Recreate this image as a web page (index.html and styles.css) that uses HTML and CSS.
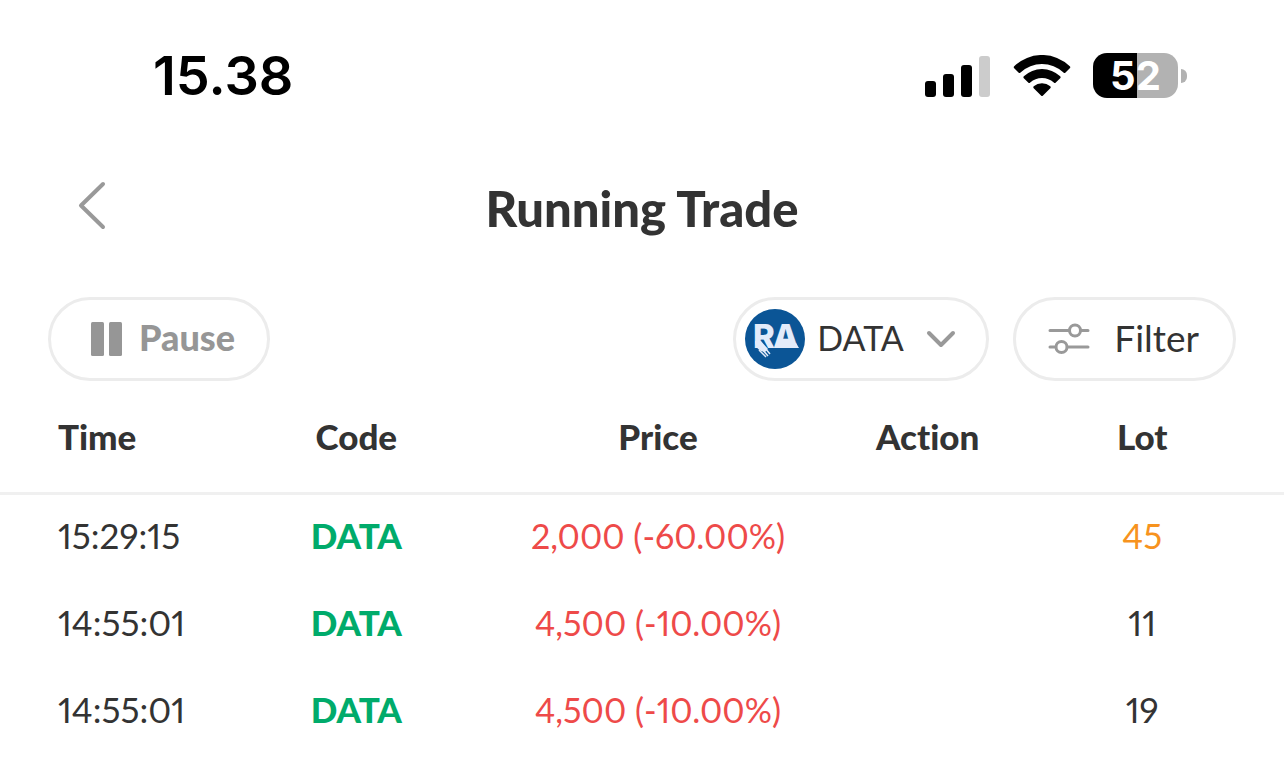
FILE: index.html
```html
<!DOCTYPE html>
<html dir="ltr" lang="en">
  <head>
    <meta charset="utf-8" />
    <meta name="viewport" content="width=device-width, initial-scale=1.0" />
    <title>Running Trade</title>

    <link rel="stylesheet" href="styles.css">
  </head>
  <body>
    <div class="app">
      <div class="status-bar">
        <time class="clock">15.38</time>
        <div class="indicators">
          <svg class="signal" viewBox="0 0 66 42" aria-hidden="true">
            <rect x="0" y="26" width="11" height="16" rx="3" />
            <rect x="18" y="19" width="11" height="23" rx="3" />
            <rect x="36" y="10" width="11" height="32" rx="3" />
            <rect class="off" x="54" y="1" width="11" height="41" rx="3" />
          </svg>
          <svg class="wifi" viewBox="0 0 58 42" aria-hidden="true">
            <path d="M1.2 11.2a40 40 0 0 1 55.600 0q1 1 0 2l-4.300 4.300q-1 1-2 0a31.500 31.500 0 0 0-43 0q-1 1-2 0l-4.300-4.300q-1-1 0-2z" />
            <path d="M10.800 21.300a26.500 26.500 0 0 1 36.400 0q1 1 0 2l-4.400 4.300q-1 1-2 0a17.500 17.500 0 0 0-23.600 0q-1 1-2 0l-4.400-4.300q-1-1 0-2z" />
            <path d="M20.700 31.300a13 13 0 0 1 16.600 0q1 1 0 2l-7.300 7.300q-1 1-2 0l-7.300-7.300q-1-1 0-2z" />
          </svg>
          <div class="battery">
            <div class="battery-level">52</div>
            <div class="battery-tip"></div>
          </div>
        </div>
      </div>

      <header class="header">
        <button class="back" type="button" aria-label="Back">
          <svg viewBox="0 0 30 50" aria-hidden="true">
            <path d="M26 4 4 25.500 26 47" />
          </svg>
        </button>
        <h1>Running Trade</h1>
      </header>

      <div class="toolbar">
        <button class="pill pause" type="button">
          <svg viewBox="0 0 32 34" aria-hidden="true">
            <rect x="0" y="0" width="13" height="34" rx="1.500" />
            <rect x="18" y="0" width="13" height="34" rx="1.500" />
          </svg>
          <span class="pill-text">Pause</span>
        </button>
        <div class="pill stock">
          <svg class="logo" viewBox="0 0 60 60" aria-hidden="true">
            <circle class="logo-disc" cx="30" cy="30" r="30" />
            <text class="logo-text" x="8" y="39">R</text>
            <text class="logo-text" x="28" y="39">A</text>
            <path class="logo-ink" d="M10 32h6l7 8-3 3-4-1q-5-3-6-8zM34 34h17l3 5H32z" />
            <path class="logo-lines" d="M14 41l7 7M17 40l6 7M20 39l5 6" />
          </svg>
          <select class="stock-select pill-text" aria-label="Stock code">
            <option>DATA</option>
          </select>
          <svg class="chevron" viewBox="0 0 30 18" aria-hidden="true">
            <path d="M3 3l12 12L27 3" />
          </svg>
        </div>
        <button class="pill filter" type="button">
          <svg viewBox="0 0 42 32" aria-hidden="true">
            <path d="M2 7.500h18.500M33 7.500h7M2 24h5M20 24h20" />
            <circle cx="27" cy="7.500" r="5.500" />
            <circle cx="13.500" cy="24" r="5.500" />
          </svg>
          <span class="pill-text">Filter</span>
        </button>
      </div>

      <table class="trades">
        <thead>
          <tr>
            <th class="time">Time</th>
            <th class="code">Code</th>
            <th class="price">Price</th>
            <th class="action">Action</th>
            <th class="lot">Lot</th>
          </tr>
        </thead>
        <tbody>
          <tr>
            <td class="time">15:29:15</td>
            <td class="code">DATA</td>
            <td class="price">2,000 (-60.00%)</td>
            <td class="action"></td>
            <td class="lot big">45</td>
          </tr>
          <tr>
            <td class="time">14:55:01</td>
            <td class="code">DATA</td>
            <td class="price">4,500 (-10.00%)</td>
            <td class="action"></td>
            <td class="lot">11</td>
          </tr>
          <tr>
            <td class="time">14:55:01</td>
            <td class="code">DATA</td>
            <td class="price">4,500 (-10.00%)</td>
            <td class="action"></td>
            <td class="lot">19</td>
          </tr>
        </tbody>
      </table>
    </div>
  </body>
</html>
```
FILE: styles.css
```css
* {
  box-sizing: border-box;
}

body {
  margin: 0;
  background-color: #fff;
  color: #333;
  font-family: Lato, "Liberation Sans", sans-serif;
  font-size: 34px;
  font-variant-ligatures: none;
}

button,
select {
  margin: 0;
  padding: 0;
  border: none;
  background: none;
  color: inherit;
  font: inherit;
  cursor: pointer;
}

svg {
  display: block;
  flex: none;
}

/* Status bar */

.status-bar {
  display: flex;
  align-items: center;
  justify-content: space-between;
  height: 151px;
  padding: 0 97px 0 153px;
  color: #000;
  font-family: Inter, "Liberation Sans", sans-serif;
}

.clock {
  font-size: 54px;
  font-weight: 600;
}

.indicators {
  display: flex;
  align-items: center;
}

.signal {
  width: 66px;
  height: 42px;
}

.signal .off {
  fill: #ccc;
}

.wifi {
  width: 58px;
  height: 42px;
  margin: 0 22px;
}

.battery {
  display: flex;
  align-items: center;
  gap: 3px;
}

.battery-level {
  width: 85px;
  border-radius: 14px;
  background: linear-gradient(to right, #000 52%, #b2b2b2 52%);
  color: #fff;
  font-size: 40px;
  font-weight: 700;
  line-height: 45px;
  text-align: center;
}

.battery-tip {
  width: 6px;
  height: 14px;
  border-radius: 0 6px 6px 0;
  background-color: #b2b2b2;
}

/* Header */

.header {
  display: grid;
  grid-template-columns: 1fr auto 1fr;
  align-items: center;
  height: 114px;
  padding: 0 77px;
}

.header h1 {
  margin: 0;
  font-size: 49px;
  font-weight: 900;
}

.back {
  justify-self: start;
  padding-bottom: 6px;
}

.back svg {
  width: 30px;
  height: 50px;
  fill: none;
  stroke: #999;
  stroke-width: 4;
  stroke-linecap: round;
  stroke-linejoin: round;
}

/* Toolbar */

.toolbar {
  display: flex;
  gap: 24px;
  padding: 32px 48px 0;
}

.pill {
  display: flex;
  align-items: center;
  height: 84px;
  border: 3px solid #ececec;
  border-radius: 42px;
}

.pill-text {
  padding-bottom: 4px;
}

.pause {
  gap: 16px;
  margin-right: auto;
  padding: 0 32px 0 40px;
  color: #969696;
  font-size: 36px;
  font-weight: 900;
}

.pause svg {
  width: 32px;
  height: 34px;
  fill: #969696;
}

.stock {
  padding: 0 30px 0 9px;
}

.logo {
  width: 60px;
  height: 60px;
  margin-right: 12px;
}

.logo-disc {
  fill: #0b5596;
}

.logo-text {
  fill: #e3ebfa;
  font-family: Inter, "Liberation Sans", sans-serif;
  font-size: 33px;
  font-weight: 800;
}

.logo-ink {
  fill: #e3ebfa;
}

.logo-lines {
  fill: none;
  stroke: #e3ebfa;
  stroke-width: 1.5;
}

.stock-select {
  appearance: none;
}

.chevron {
  width: 30px;
  height: 18px;
  margin-left: 22px;
  fill: none;
  stroke: #999;
  stroke-width: 4;
  stroke-linecap: round;
  stroke-linejoin: round;
}

.filter {
  gap: 24px;
  padding: 0 34px 0 32px;
  font-size: 37px;
}

.filter svg {
  width: 42px;
  height: 32px;
  fill: none;
  stroke: #999;
  stroke-width: 3;
  stroke-linecap: round;
}

/* Trades */

.trades {
  width: 100%;
  border-spacing: 0;
  font-size: 35px;
  font-variant-numeric: proportional-nums;
  table-layout: fixed;
}

.trades th,
.trades td {
  height: 87px;
  padding: 0 0 7px;
  font-weight: 400;
  text-align: center;
  white-space: nowrap;
}

.trades th {
  height: 114px;
  padding: 0 0 2px;
  border-bottom: 3px solid #f0f0f0;
  font-weight: 900;
}

.trades .time {
  width: 16%;
  padding-left: 58px;
  text-align: left;
}

.trades .code {
  width: 23.5%;
}

.trades .price {
  width: 23.5%;
}

.trades .action {
  width: 18.5%;
}

.trades .lot {
  width: 18.5%;
  padding-right: 46px;
}

.trades td.code {
  color: #00ab6b;
  font-weight: 900;
}

.trades td.price {
  color: #ee4a49;
  font-size: 34px;
}

.trades td.big {
  color: #f7931e;
}
```
